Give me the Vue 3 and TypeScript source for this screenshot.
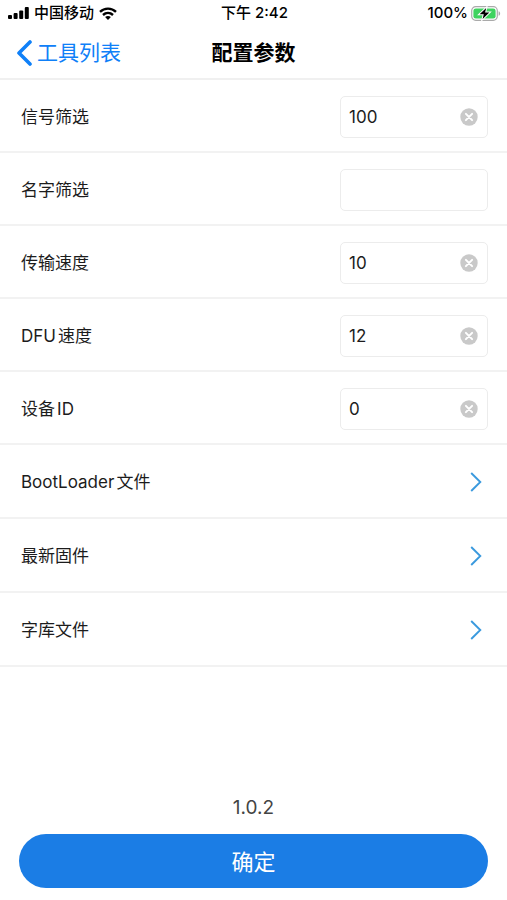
<script setup lang="ts">
import { reactive } from 'vue'

interface Field {
  id: string
  label: string
  value: string
}

const fields = reactive<Field[]>([
  { id: 'signal', label: '信号筛选', value: '100' },
  { id: 'name', label: '名字筛选', value: '' },
  { id: 'transfer', label: '传输速度', value: '10' },
  { id: 'dfu', label: 'DFU速度', value: '12' },
  { id: 'device', label: '设备ID', value: '0' },
])

const files: string[] = ['BootLoader文件', '最新固件', '字库文件']
</script>

<template>
  <div class="page">
    <div class="status">
      <div class="carrier">
        <svg width="21" height="12" viewBox="0 0 21 12" aria-hidden="true">
          <rect x="0" y="8" width="4" height="4" rx="1" />
          <rect x="5.6" y="6" width="4" height="6" rx="1" />
          <rect x="11.2" y="3.4" width="4" height="8.6" rx="1" />
          <rect x="16.8" y="0" width="4" height="12" rx="1" />
        </svg>
        <span>中国移动</span>
        <svg width="18" height="13" viewBox="0 0 18 13" aria-hidden="true">
          <g fill="none" stroke="#000" stroke-width="2.4">
            <path d="M1 4.9C5.5 .5 12.5 .5 17 4.9" />
            <path d="M4 8C7 5.2 11 5.2 14 8" />
          </g>
          <path d="M9 13 6.1 10.1C7.8 8.6 10.2 8.6 11.9 10.1Z" />
        </svg>
      </div>
      <span class="time">下午 2:42</span>
      <div class="power">
        <span>100%</span>
        <svg width="30" height="15" viewBox="0 0 30 15" aria-hidden="true">
          <rect x=".7" y=".7" width="25.6" height="13.6" rx="4" fill="#fff" stroke="#aaa" stroke-width="1.2" />
          <rect x="2.4" y="2.4" width="22.2" height="10.2" rx="2.4" fill="#3fd35f" />
          <path d="M27.6 5.2c2 .7 2 3.9 0 4.6z" fill="#aaa" />
          <path
            d="M15.2 2 8.6 8.3h4.2L11.6 13 18.3 6.6h-4.2z"
            stroke="#fff"
            stroke-width="2"
            paint-order="stroke"
          />
        </svg>
      </div>
    </div>

    <header class="nav">
      <a class="back" href="#">
        <svg width="17" height="26" viewBox="0 0 17 26" aria-hidden="true">
          <path d="M14 2 3 13 14 24" fill="none" stroke="#0f80f8" stroke-width="3.6" stroke-linecap="round" stroke-linejoin="round" />
        </svg>
        <span>工具列表</span>
      </a>
      <h1>配置参数</h1>
    </header>

    <form class="form" @submit.prevent>
      <div v-for="field in fields" :key="field.id" class="row">
        <label :for="field.id">{{ field.label }}</label>
        <div class="box">
          <input :id="field.id" v-model="field.value" type="text" autocomplete="off" />
          <button v-if="field.value" class="clear" type="button" aria-label="清除" @click="field.value = ''">
            <svg width="18" height="18" viewBox="0 0 18 18" aria-hidden="true">
              <circle cx="9" cy="9" r="8.7" fill="#c9c9c9" />
              <path d="M5.9 5.9 12.1 12.1M12.1 5.9 5.9 12.1" stroke="#fff" stroke-width="2" stroke-linecap="round" />
            </svg>
          </button>
        </div>
      </div>

      <a v-for="file in files" :key="file" class="row link" href="#">
        <span>{{ file }}</span>
        <svg width="12" height="20" viewBox="0 0 12 20" aria-hidden="true">
          <path d="M1.2 1 10.3 10 1.2 19" fill="none" stroke="#3b9ade" stroke-width="1.9" />
        </svg>
      </a>

      <footer class="footer">
        <p>1.0.2</p>
        <button class="submit" type="submit">确定</button>
      </footer>
    </form>
  </div>
</template>

<style>
body {
  margin: 0;
  background: #fff;
}
</style>

<style scoped>
.page {
  display: flex;
  flex-direction: column;
  min-height: 100vh;
  background: #fff;
  color: #1c1c1c;
  font-family: Inter, 'Noto Sans CJK SC', sans-serif;
  font-size: 17px;
  text-autospace: normal;
}

.page * {
  box-sizing: border-box;
}

svg {
  display: block;
  flex: none;
}

.status {
  display: grid;
  grid-template-columns: 1fr auto 1fr;
  align-items: center;
  height: 26px;
  padding: 0 6px 0 8px;
  color: #000;
  font-size: 15px;
  font-weight: 500;
  line-height: 26px;
}

.carrier,
.power {
  display: flex;
  align-items: center;
  gap: 4px;
}

.carrier {
  gap: 5px;
}

.power {
  justify-content: flex-end;
  gap: 3px;
}

.nav {
  display: grid;
  grid-template-columns: 1fr auto 1fr;
  align-items: center;
  height: 54px;
  padding: 2px 16px 0;
  border-bottom: 2px solid #f0f0f0;
  font-size: 21px;
  line-height: 30px;
}

.back {
  display: flex;
  align-items: center;
  gap: 4px;
  color: #0f80f8;
  text-decoration: none;
}

h1 {
  margin: 0;
  color: #000;
  font-size: 21px;
  font-weight: 600;
}

.form {
  display: flex;
  flex: 1;
  flex-direction: column;
}

.row {
  display: flex;
  align-items: center;
  justify-content: space-between;
  height: 73px;
  padding: 2px 19px 0 21px;
  border-bottom: 2px solid #f2f2f2;
  line-height: 24px;
}

.link {
  height: 74px;
  padding-right: 25px;
  color: inherit;
  text-decoration: none;
}

.box {
  display: flex;
  align-items: center;
  width: 148px;
  height: 42px;
  padding: 0 9px 0 8px;
  border: 1px solid #ececec;
  border-radius: 5px;
}

.box input {
  flex: 1;
  min-width: 0;
  padding: 0;
  border: 0;
  outline: 0;
  background: none;
  color: inherit;
  font: inherit;
}

button {
  padding: 0;
  border: 0;
  background: none;
  font: inherit;
}

.footer {
  display: flex;
  flex-direction: column;
  gap: 12px;
  margin-top: auto;
  padding: 24px 19px 12px;
}

.footer p {
  margin: 0;
  color: #444;
  font-size: 19px;
  line-height: 28px;
  text-align: center;
}

.submit {
  height: 54px;
  padding-bottom: 3px;
  border-radius: 27px;
  background: #1b7de5;
  color: #fff;
  font-size: 22px;
}
</style>
